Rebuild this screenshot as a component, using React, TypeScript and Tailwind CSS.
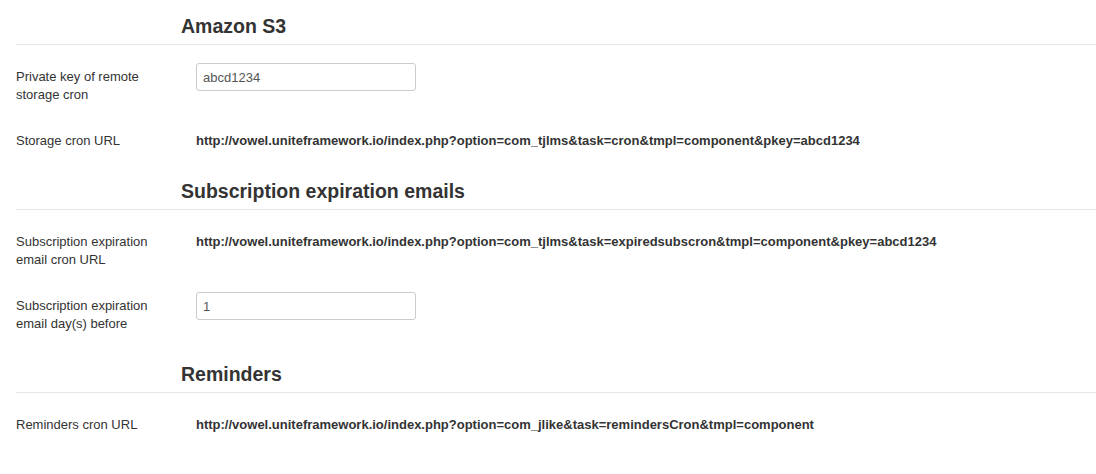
import React from 'react';

type Field =
  | { label: string; kind: 'input'; value: string }
  | { label: string; kind: 'url'; value: string };

const sections: { title: string; fields: Field[] }[] = [
  {
    title: 'Amazon S3',
    fields: [
      { label: 'Private key of remote storage cron', kind: 'input', value: 'abcd1234' },
      {
        label: 'Storage cron URL',
        kind: 'url',
        value: 'http://vowel.uniteframework.io/index.php?option=com_tjlms&task=cron&tmpl=component&pkey=abcd1234',
      },
    ],
  },
  {
    title: 'Subscription expiration emails',
    fields: [
      {
        label: 'Subscription expiration email cron URL',
        kind: 'url',
        value: 'http://vowel.uniteframework.io/index.php?option=com_tjlms&task=expiredsubscron&tmpl=component&pkey=abcd1234',
      },
      { label: 'Subscription expiration email day(s) before', kind: 'input', value: '1' },
    ],
  },
  {
    title: 'Reminders',
    fields: [
      {
        label: 'Reminders cron URL',
        kind: 'url',
        value: 'http://vowel.uniteframework.io/index.php?option=com_jlike&task=remindersCron&tmpl=component',
      },
    ],
  },
];

function Row({ field }: { field: Field }) {
  return (
    <div className="flex mb-[23px]">
      {/* label column, 160 + 20 gutter */}
      <label className="w-[160px] mr-[20px] pt-[5px] shrink-0 text-[13px] leading-[18px] text-[#333]">
        {field.label}
      </label>
      {field.kind === 'input' ? (
        <input
          type="text"
          defaultValue={field.value}
          className="w-[220px] h-[28px] px-[6px] border border-[#cccccc] rounded-[3px] text-[13px] text-[#555] bg-white outline-none"
        />
      ) : (
        <div className="pt-[5px] text-[13px] leading-[18px] font-bold text-[#333] whitespace-nowrap">
          {field.value}
        </div>
      )}
    </div>
  );
}

export default function App() {
  return (
    <div className="min-h-screen bg-white pl-[16px] pt-[8px] font-['Liberation_Sans',Arial,sans-serif]">
      {sections.map((s) => (
        <section key={s.title}>
          <h3 className="pl-[165px] leading-[36px] text-[19.5px] font-bold text-[#333] border-b border-[#e5e5e5] mb-[18px]">
            {s.title}
          </h3>
          {s.fields.map((f) => (
            <Row key={f.label} field={f} />
          ))}
        </section>
      ))}
    </div>
  );
}
